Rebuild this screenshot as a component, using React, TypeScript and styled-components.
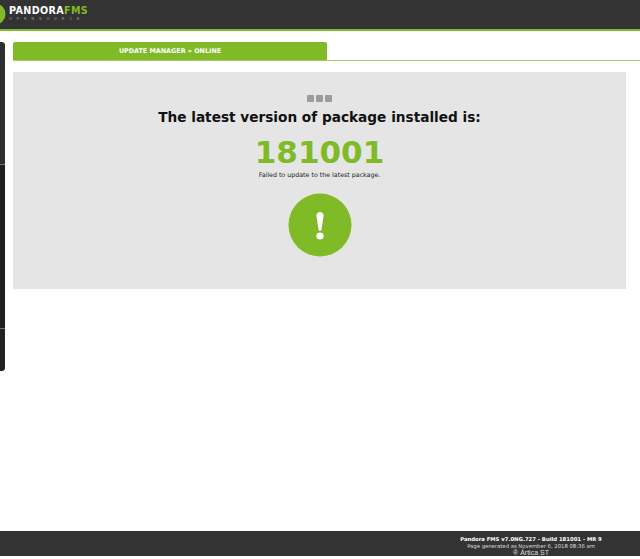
import styled, {createGlobalStyle} from "styled-components";

const Global = createGlobalStyle`
  html, body {
    margin: 0;
    padding: 0;
    background: #fff;
    overflow: hidden;
  }
`
const Page = styled.div`
  width: 640px;
  height: 559px;
  display: flex;
  flex-direction: column;
  font-family: Verdana, "DejaVu Sans", sans-serif;
`
const Header = styled.header`
  height: 29px;
  flex: none;
  background: #333;
  border-bottom: 2px solid #80ba27;
  display: flex;
  align-items: flex-start;
  overflow: hidden;
`
const LogoMark = styled.svg`
  width: 6px;
  height: 22px;
  margin: 3px 3px 0 0;
  flex: none;
`
const LogoText = styled.div`
  display: flex;
  flex-direction: column;
  margin-top: 5px;
`
const LogoName = styled.div`
  font: 700 9.6px/12px "DejaVu Sans", Verdana, sans-serif;
  letter-spacing: 0.35px;
  color: #fff;
  & > span {
    color: #80ba27;
  }
`
const LogoSub = styled.div`
  font: 400 3.5px/5px "Liberation Sans", Arial, sans-serif;
  letter-spacing: 5.05px;
  color: #aaa;
`
const Body = styled.div`
  flex: 1;
  display: flex;
  align-items: flex-start;
`
const Side = styled.nav`
  width: 5px;
  height: 329px;
  margin-top: 11px;
  flex: none;
  display: flex;
  flex-direction: column;
  border-radius: 0 4px 4px 0;
  overflow: hidden;
  background: #222;
`
const SideBlock = styled.div<{$h: number; $bg: string}>`
  height: ${({$h}) => $h}px;
  background: ${({$bg}) => $bg};
  border-bottom: 1px solid #777;
  &:last-child {
    border-bottom: none;
    flex: 1;
  }
`
const Content = styled.main`
  flex: 1;
  margin: 11px 0 0 8px;
  min-width: 0;
`
const TabBar = styled.div`
  height: 18px;
  border-bottom: 1px solid #a5cf64;
  display: flex;
`
const Tab = styled.div`
  width: 314px;
  height: 18px;
  background: #80ba27;
  border-radius: 2px 2px 0 0;
  color: #fff;
  font: 700 6.4px/19px "DejaVu Sans", Verdana, sans-serif;
  text-align: center;
`
const Panel = styled.section`
  margin: 11px 14px 0 0;
  height: 217px;
  background: #e5e5e5;
  display: flex;
  flex-direction: column;
  align-items: center;
  padding-top: 23px;
  box-sizing: border-box;
`
const Dots = styled.div`
  display: flex;
  gap: 2px;
  height: 7px;
`
const Dot = styled.span`
  width: 7px;
  height: 7px;
  border-radius: 1px;
  background: #9c9c9c;
`
const Title = styled.h2`
  margin: 5px 0 0;
  font: 700 13.67px/20px "DejaVu Sans", Verdana, sans-serif;
  color: #111;
`
const Version = styled.div`
  margin-top: 8px;
  font: 700 31px/34px "DejaVu Sans", Verdana, sans-serif;
  color: #80ba27;
`
const Note = styled.p`
  margin: 1px 0 0;
  font: 400 6.3px/10px "DejaVu Sans", Verdana, sans-serif;
  color: #222;
`
const Alert = styled.svg`
  width: 64px;
  height: 64px;
  margin-top: 13px;
`
const Footer = styled.footer`
  height: 25px;
  flex: none;
  margin-bottom: 3px;
  background: #333;
  display: flex;
  flex-direction: column;
  align-items: center;
  padding-left: 422px;
  padding-top: 5px;
  box-sizing: border-box;
  color: #fff;
`
const FootStrong = styled.div`
  font: 700 5.3px/7px "DejaVu Sans", Verdana, sans-serif;
  white-space: nowrap;
`
const FootLine = styled.div`
  font: 400 5.3px/6.5px "DejaVu Sans", Verdana, sans-serif;
  color: #ddd;
  white-space: nowrap;
`
const FootCredit = styled.div`
  font: 400 7px/6.5px "Liberation Sans", Arial, sans-serif;
  color: #ddd;
  white-space: nowrap;
`

export default function App() {
    return <Page>
        <Global/>
        <Header>
            <LogoMark viewBox="0 0 6 22">
                <circle cx="-5" cy="11" r="10.5" fill="#80ba27"/>
                <circle cx="-5" cy="11" r="6.5" fill="#fff"/>
                <rect x="-8" y="6" width="11" height="10" rx="4" fill="#80ba27"/>
            </LogoMark>
            <LogoText>
                <LogoName>PANDORA<span>FMS</span></LogoName>
                <LogoSub>OPENSOURCE</LogoSub>
            </LogoText>
        </Header>
        <Body>
            <Side>
                <SideBlock $h={122} $bg="#2e2e2e"/>
                <SideBlock $h={163} $bg="#1e1e1e"/>
                <SideBlock $h={44} $bg="#222"/>
            </Side>
            <Content>
                <TabBar>
                    <Tab>UPDATE MANAGER » ONLINE</Tab>
                </TabBar>
                <Panel>
                    <Dots><Dot/><Dot/><Dot/></Dots>
                    <Title>The latest version of package installed is:</Title>
                    <Version>181001</Version>
                    <Note>Failed to update to the latest package.</Note>
                    <Alert viewBox="0 0 64 64">
                        <circle cx="32" cy="32" r="31.5" fill="#80ba27"/>
                        <path d="M28.4 22.6C28.4 17.8 35.6 17.8 35.6 22.6L33.5 36.6C33.3 38.4 30.7 38.4 30.5 36.6Z" fill="#fff"/>
                        <circle cx="32" cy="43" r="3.6" fill="#fff"/>
                    </Alert>
                </Panel>
            </Content>
        </Body>
        <Footer>
            <FootStrong>Pandora FMS v7.0NG.727 - Build 181001 - MR 9</FootStrong>
            <FootLine>Page generated as November 6, 2018 08:36 am</FootLine>
            <FootCredit>® Ártica ST</FootCredit>
        </Footer>
    </Page>
}
